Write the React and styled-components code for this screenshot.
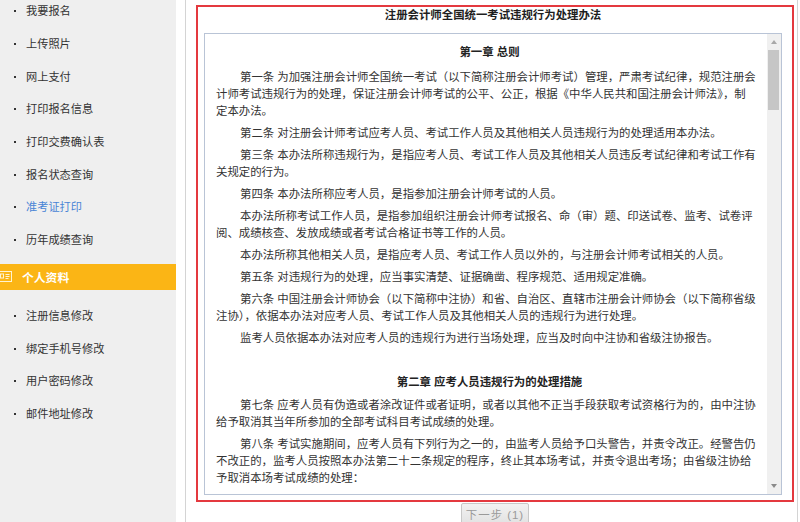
import React from 'react';
import styled, {createGlobalStyle} from 'styled-components';

const GlobalStyle = createGlobalStyle`
  body {
    margin: 0;
    background: #fff;
    font-family: "Liberation Sans", "Noto Sans CJK SC", sans-serif;
  }
`;

const menuTop = ['我要报名', '上传照片', '网上支付', '打印报名信息', '打印交费确认表', '报名状态查询', '准考证打印', '历年成绩查询'];
const menuProfile = ['注册信息修改', '绑定手机号修改', '用户密码修改', '邮件地址修改'];

const sections = [
  {type: 'h', text: '第一章 总则'},
  {type: 'p', lines: ['第一条 为加强注册会计师全国统一考试（以下简称注册会计师考试）管理，严肃考试纪律，规范注册会', '计师考试违规行为的处理，保证注册会计师考试的公平、公正，根据《中华人民共和国注册会计师法》，制', '定本办法。']},
  {type: 'p', lines: ['第二条 对注册会计师考试应考人员、考试工作人员及其他相关人员违规行为的处理适用本办法。']},
  {type: 'p', lines: ['第三条 本办法所称违规行为，是指应考人员、考试工作人员及其他相关人员违反考试纪律和考试工作有', '关规定的行为。']},
  {type: 'p', lines: ['第四条 本办法所称应考人员，是指参加注册会计师考试的人员。']},
  {type: 'p', lines: ['本办法所称考试工作人员，是指参加组织注册会计师考试报名、命（审）题、印送试卷、监考、试卷评', '阅、成绩核查、发放成绩或者考试合格证书等工作的人员。']},
  {type: 'p', lines: ['本办法所称其他相关人员，是指应考人员、考试工作人员以外的，与注册会计师考试相关的人员。']},
  {type: 'p', lines: ['第五条 对违规行为的处理，应当事实清楚、证据确凿、程序规范、适用规定准确。']},
  {type: 'p', lines: ['第六条 中国注册会计师协会（以下简称中注协）和省、自治区、直辖市注册会计师协会（以下简称省级', '注协），依据本办法对应考人员、考试工作人员及其他相关人员的违规行为进行处理。']},
  {type: 'p', lines: ['监考人员依据本办法对应考人员的违规行为进行当场处理，应当及时向中注协和省级注协报告。']},
  {type: 'h', text: '第二章 应考人员违规行为的处理措施', spaced: true},
  {type: 'p', lines: ['第七条 应考人员有伪造或者涂改证件或者证明，或者以其他不正当手段获取考试资格行为的，由中注协', '给予取消其当年所参加的全部考试科目考试成绩的处理。']},
  {type: 'p', lines: ['第八条 考试实施期间，应考人员有下列行为之一的，由监考人员给予口头警告，并责令改正。经警告仍', '不改正的，监考人员按照本办法第二十二条规定的程序，终止其本场考试，并责令退出考场；由省级注协给', '予取消本场考试成绩的处理：']},
  {type: 'p', lines: ['（一）携带规定以外的物品进入考场或者未放在指定位置的；']},
];

function IdCardIcon() {
  return (
    <svg width="14" height="11" viewBox="0 0 14 11" fill="none" stroke="#fff3cf" strokeWidth="1">
      <rect x="0.5" y="0.5" width="13" height="10"/>
      <rect x="2.5" y="3" width="3" height="4"/>
      <path d="M7.5 3.5h4M7.5 5.5h4M7.5 7.5h3"/>
    </svg>
  );
}

function Para({lines}) {
  return (
    <Paragraph>
      {lines.map((line, i) => (
        <React.Fragment key={i}>{i > 0 && <br/>}{line}</React.Fragment>
      ))}
    </Paragraph>
  );
}

export default function App() {
  return (
    <Page>
      <GlobalStyle/>
      <Sidebar>
        <NavList>
          {menuTop.map(item => (
            <NavItem key={item} $active={item === '准考证打印'}>{item}</NavItem>
          ))}
        </NavList>
        <GroupHeader>
          <IdCardIcon/>
          <span>个人资料</span>
        </GroupHeader>
        <NavList>
          {menuProfile.map(item => <NavItem key={item}>{item}</NavItem>)}
        </NavList>
      </Sidebar>
      <Main>
        <NoticeBox>
          <NoticeTitle>注册会计师全国统一考试违规行为处理办法</NoticeTitle>
          <ReadingPane>
            <ReadingText>
              {sections.map((s, i) => s.type === 'h'
                ? <Chapter key={i} $spaced={s.spaced}>{s.text}</Chapter>
                : <Para key={i} lines={s.lines}/>)}
            </ReadingText>
            <ScrollTrack>
              <ScrollArrow><Triangle/></ScrollArrow>
              <ScrollThumb/>
              <ScrollGap/>
              <ScrollArrow><Triangle $down/></ScrollArrow>
            </ScrollTrack>
          </ReadingPane>
        </NoticeBox>
        <NextButton disabled>下一步 (1)</NextButton>
      </Main>
    </Page>
  );
}

const Page = styled.div`
  display: flex;
  height: 522px;
  overflow: hidden;
`;

const Sidebar = styled.aside`
  width: 176px;
  flex-shrink: 0;
  background: #efefef;
`;

const NavList = styled.ul`
  list-style: none;
  margin: 0;
  padding: 0;
  &:first-child {
    margin-top: -6px;
  }
`;

const NavItem = styled.li`
  display: flex;
  align-items: center;
  height: 32.7px;
  padding-left: 14px;
  font-size: 11.2px;
  color: ${p => p.$active ? '#4a85d6' : '#333'};
  &::before {
    content: '';
    width: 2px;
    height: 2px;
    margin: 2px 10px 0 0;
    background: #333;
  }
`;

const GroupHeader = styled.div`
  display: flex;
  align-items: center;
  gap: 10px;
  height: 26px;
  margin: 8px 0 9px;
  background: #fbb515;
  color: #fff;
  font-size: 11.8px;
  font-weight: bold;
  svg {
    margin-left: -2px;
  }
`;

const Main = styled.main`
  width: 598px;
  margin-left: 9px;
  padding: 5px 3px 0 10px;
  border-left: 1px solid #d4d4d4;
  border-right: 1px solid #d4d4d4;
`;

const NoticeBox = styled.section`
  box-sizing: border-box;
  height: 497px;
  border: 2px solid #e4393f;
  padding: 0 10px 5px 6px;
  display: flex;
  flex-direction: column;
`;

const NoticeTitle = styled.h1`
  margin: 0 0 9px;
  line-height: 17px;
  font-size: 11.4px;
  font-weight: bold;
  color: #1e1e1e;
  text-align: center;
`;

const ReadingPane = styled.div`
  flex: 1;
  display: flex;
  min-height: 0;
  border: 1px solid #b9c4d6;
`;

const ReadingText = styled.div`
  flex: 1;
  overflow: hidden;
  padding: 10px 4px 0 11px;
  font-size: 11.4px;
  line-height: 17px;
  color: #333;
`;

const Chapter = styled.h2`
  margin: ${p => p.$spaced ? '27px 0 6px' : '0 0 8px'};
  font-size: 11.4px;
  line-height: 17px;
  font-weight: bold;
  color: #222;
  text-align: center;
`;

const Paragraph = styled.p`
  margin: 0 0 5px;
  text-indent: 24px;
  white-space: nowrap;
`;

const ScrollTrack = styled.div`
  width: 14px;
  display: flex;
  flex-direction: column;
  background: #f0f0f0;
`;

const ScrollArrow = styled.div`
  height: 16px;
  display: flex;
  align-items: center;
  justify-content: center;
`;

const Triangle = styled.span`
  width: 0;
  height: 0;
  border-left: 3px solid transparent;
  border-right: 3px solid transparent;
  ${p => p.$down ? 'border-top: 4px solid #8a8a8a;' : 'border-bottom: 4px solid #a8a8a8;'}
`;

const ScrollThumb = styled.div`
  height: 60px;
  margin: 0 2px 0 1px;
  background: #c6c6c6;
`;

const ScrollGap = styled.div`
  flex: 1;
`;

const NextButton = styled.button`
  display: block;
  width: 68px;
  height: 22px;
  margin: 1px auto 0;
  padding: 0;
  border: 1px solid #c8c8c8;
  border-radius: 2px;
  background: linear-gradient(#f2f2f2, #e2e2e2);
  color: #9a9a9a;
  font-family: "Liberation Sans", "Noto Sans CJK SC", sans-serif;
  font-size: 11.4px;
  letter-spacing: 1px;
`;
